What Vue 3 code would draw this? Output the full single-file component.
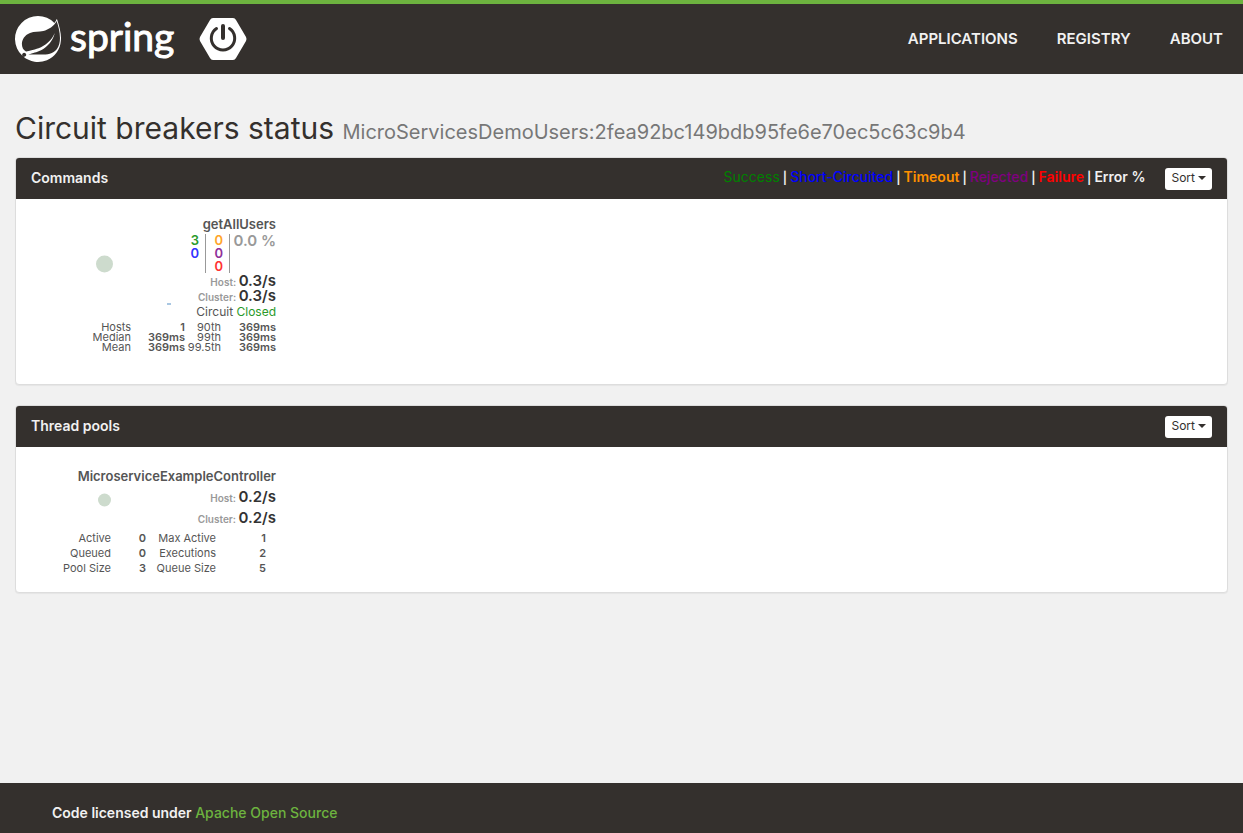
<script setup>
const legend = [
  { label: 'Success', cls: 'green' },
  { label: 'Short-Circuited', cls: 'blue' },
  { label: 'Timeout', cls: 'orange' },
  { label: 'Rejected', cls: 'purple' },
  { label: 'Failure', cls: 'red' },
  { label: 'Error %', cls: 'plain' },
]
const latency = [
  ['Hosts', '1', '90th', '369ms'],
  ['Median', '369ms', '99th', '369ms'],
  ['Mean', '369ms', '99.5th', '369ms'],
]
const pool = [
  ['Active', '0', 'Max Active', '1'],
  ['Queued', '0', 'Executions', '2'],
  ['Pool Size', '3', 'Queue Size', '5'],
]
</script>

<template>
  <div class="page">
    <header class="topbar">
      <a class="brand" href="#" aria-label="Spring Boot">
        <svg class="leaf" viewBox="0 0 24 24" aria-hidden="true">
          <path fill="#fff" d="M21.8537 1.4158a10.4504 10.4504 0 0 1-1.284 2.2471A11.9666 11.9666 0 1 0 3.8518 20.7757l.4445.3951a11.9543 11.9543 0 0 0 19.6316-8.2971c.3457-3.0126-.568-6.8649-2.0742-11.458zM5.5805 20.8745a1.0174 1.0174 0 1 1-.1482-1.4323 1.0396 1.0396 0 0 1 .1482 1.4323zm16.1991-3.5806c-2.9385 3.9263-9.2601 2.5928-13.2852 2.7904 0 0-.7161.0494-1.4323.1481 0 0 .2717-.1234.6174-.2469 2.8398-.9877 4.1732-1.1853 5.9018-2.0743 3.2349-1.6545 6.4698-5.2844 7.1118-9.0379-1.2347 3.6053-4.9881 6.7167-8.3959 7.9761-2.3459.8643-6.5685 1.7039-6.5685 1.7039l-.1729-.0988c-2.8645-1.4076-2.9632-7.6304 2.2718-9.6306 2.2966-.889 4.4696-.395 6.9637-.9877 2.6422-.6174 5.7043-2.5929 6.939-5.1857 1.3828 4.1732 3.062 10.643.0493 14.6434z" />
        </svg>
        <span class="wordmark">spring</span>
        <svg class="boot" viewBox="0 0 48 44" aria-hidden="true">
          <path d="M14 1h20q2 0 3 2l10 17q1 2 0 4L37 41q-1 2-3 2H14q-2 0-3-2L1 24q-1-2 0-4L11 3q1-2 3-2Z" fill="#fff" />
          <path d="M17.500 11.500A11.700 11.700 0 1 0 30.500 11.500" fill="none" stroke="#34302d" stroke-width="3" stroke-linecap="round" />
          <path d="M24 9v12" stroke="#34302d" stroke-width="4" stroke-linecap="round" />
        </svg>
      </a>
      <nav class="nav">
        <a href="#">APPLICATIONS</a>
        <a href="#">REGISTRY</a>
        <a href="#">ABOUT</a>
      </nav>
    </header>

    <main class="main">
      <h1>Circuit breakers status <small>MicroServicesDemoUsers:2fea92bc149bdb95fe6e70ec5c63c9b4</small></h1>

      <section class="panel">
        <div class="panel-head">
          <h2>Commands</h2>
          <p class="legend">
            <template v-for="(item, i) in legend" :key="item.label"><i v-if="i"> | </i><span :class="item.cls">{{ item.label }}</span></template>
          </p>
          <button class="sort" type="button">Sort <span class="caret"></span></button>
        </div>
        <div class="panel-body">
          <article class="monitor">
            <h3>getAllUsers</h3>
            <div class="readout">
              <svg class="chart" viewBox="0 0 140 87" aria-hidden="true">
                <circle cx="73.500" cy="30" r="8.500" fill="#cddbcd" />
                <path d="M136 70h4" stroke="#a9c7e2" stroke-width="2" />
              </svg>
              <div class="figures">
                <div class="counters">
                  <div class="count"><span class="c-green">3</span><span class="c-blue">0</span></div>
                  <div class="count"><span class="c-orange">0</span><span class="c-purple">0</span><span class="c-red">0</span></div>
                  <div class="percent">0.0 %</div>
                </div>
                <div class="rate">Host: <strong>0.3/s</strong></div>
                <div class="rate">Cluster: <strong>0.3/s</strong></div>
                <div class="state">Circuit <span class="closed">Closed</span></div>
              </div>
            </div>
            <table class="stats latency">
              <tbody>
                <tr v-for="r in latency" :key="r[0]">
                  <th scope="row">{{ r[0] }}</th><td>{{ r[1] }}</td>
                  <th>{{ r[2] }}</th><td>{{ r[3] }}</td>
                </tr>
              </tbody>
            </table>
          </article>
        </div>
      </section>

      <section class="panel">
        <div class="panel-head">
          <h2>Thread pools</h2>
          <button class="sort" type="button">Sort <span class="caret"></span></button>
        </div>
        <div class="panel-body threads">
          <article class="monitor">
            <h3>MicroserviceExampleController</h3>
            <div class="readout">
              <svg class="chart small" viewBox="0 0 140 42" aria-hidden="true">
                <circle cx="73.500" cy="14" r="6.500" fill="#cddbcd" />
              </svg>
              <div class="figures">
                <div class="rate">Host: <strong>0.2/s</strong></div>
                <div class="rate">Cluster: <strong>0.2/s</strong></div>
              </div>
            </div>
            <table class="stats pool">
              <tbody>
                <tr v-for="r in pool" :key="r[0]">
                  <th scope="row">{{ r[0] }}</th><td>{{ r[1] }}</td>
                  <th>{{ r[2] }}</th><td>{{ r[3] }}</td>
                </tr>
              </tbody>
            </table>
          </article>
        </div>
      </section>
    </main>

    <footer class="footer">Code licensed under <a href="#">Apache Open Source</a></footer>
  </div>
</template>

<style>
body { margin: 0; background: #f1f1f1; }
</style>

<style scoped>
.page {
  display: flex;
  flex-direction: column;
  min-height: 100vh;
  font-family: Inter, "Open Sans", sans-serif;
  font-size: 14px;
  line-height: 20px;
  color: #34302d;
}
* { box-sizing: border-box; }
a { text-decoration: none; }
.topbar {
  display: flex;
  align-items: center;
  justify-content: space-between;
  height: 74px;
  padding: 0 20px 0 15px;
  background: #34302d;
  border-top: 4px solid #6db33f;
}
.brand { display: flex; align-items: center; color: #fff; }
.leaf { width: 46px; height: 46px; }
.wordmark {
  width: 106px;
  margin-left: 9px;
  padding-bottom: 6px;
  font-family: Lato, sans-serif;
  font-size: 39px;
  line-height: 46px;
  -webkit-text-stroke: 1px #fff;
}
.boot { width: 48px; height: 44px; margin-left: 23px; }
.nav { display: flex; gap: 39px; font-size: 15px; font-weight: 600; }
.nav a { color: #f1f1f1; }
.main { flex: 1; padding: 36px 15px 0; }
h1 { margin: 0 0 11px; font-size: 30px; line-height: 36px; font-weight: 400; }
h1 small { font-size: 20px; line-height: 20px; color: #777; }
.panel {
  margin-bottom: 20px;
  background: #fff;
  border: 1px solid #ddd;
  border-radius: 4px;
  box-shadow: 0 1px 1px rgba(0, 0, 0, 0.05);
}
.panel-head {
  display: flex;
  align-items: center;
  height: 41px;
  padding: 0 15px;
  background: #34302d;
  color: #f1f1f1;
  border-radius: 3px 3px 0 0;
}
h2 { margin: 0 auto 2px 0; font-size: 14px; line-height: 20px; font-weight: 600; }
.legend { margin: 0 20px 2px 0; font-weight: 600; }
.legend i { font-size: 12px; font-style: normal; font-weight: 600; white-space: pre; }
.green { color: green; font-weight: 400; }
.blue { color: blue; font-weight: 500; }
.orange { color: #ff9000; }
.purple { color: purple; font-weight: 500; }
.red { color: red; }
.sort {
  display: flex;
  align-items: center;
  gap: 3px;
  height: 22px;
  padding: 0 6px 2px;
  font: inherit;
  font-size: 12px;
  color: #34302d;
  background: #fff;
  border: 0;
  border-radius: 3px;
}
.caret { border: 4px solid transparent; border-top-color: #34302d; border-bottom: 0; }
.panel-body { padding: 16px 15px 32px; }
.threads { padding: 19px 15px 16px; }
.monitor { width: 245px; text-align: right; color: #555; }
h3 { margin: 0; font-size: 13px; line-height: 19px; font-weight: 600; white-space: nowrap; }
.readout { display: flex; justify-content: space-between; }
.chart { width: 140px; height: 87px; flex: none; }
.small { height: 42px; }
.figures { white-space: nowrap; }
.counters { display: flex; justify-content: flex-end; height: 39px; }
.count {
  display: flex;
  flex-direction: column;
  width: 24px;
  padding-right: 6px;
  border-right: 1px solid #999;
  font-size: 13px;
  line-height: 13px;
  font-weight: 600;
}
.c-green { color: #2a9a2a; }
.c-blue { color: #3333ff; }
.c-orange { color: #ffa52a; }
.c-purple { color: #90309a; }
.c-red { color: #ff3333; }
.percent { width: 46px; font-size: 15px; line-height: 14px; font-weight: 600; color: #999; }
.rate { height: 15px; font-size: 10px; line-height: 18px; font-weight: 600; color: #999; }
.rate strong { font-size: 15px; line-height: 11px; font-weight: 600; color: #333; }
.state { font-size: 12px; line-height: 18px; }
.closed { color: #2a9a2a; }
.threads h3 { line-height: 20px; }
.threads .rate { height: 21px; line-height: 24px; }
.stats { border-collapse: collapse; table-layout: fixed; font-size: 11px; white-space: nowrap; }
.stats th { padding: 0; font-weight: 400; text-align: right; }
.stats td { padding: 0; font-weight: 600; text-align: right; }
.latency { width: 245px; margin-top: 1px; line-height: 10px; }
.latency th:nth-child(1) { width: 100px; }
.latency td:nth-child(2) { width: 54px; }
.latency th:nth-child(3) { width: 36px; }
.pool { width: 235px; margin-top: 3px; line-height: 15px; }
.pool th:nth-child(1) { width: 80px; }
.pool td:nth-child(2) { width: 35px; }
.pool th:nth-child(3) { width: 70px; }
.footer { padding: 20px 52px 10px; background: #34302d; color: #f1f1f1; font-weight: 600; }
.footer a { color: #6db33f; font-weight: 500; }
</style>
